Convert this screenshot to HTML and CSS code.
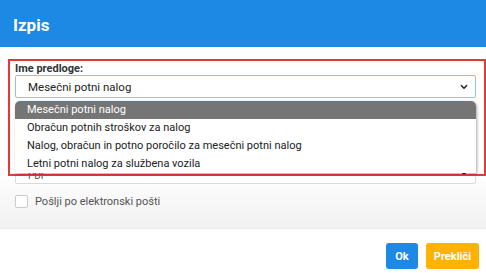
FILE: index.html
```html
<!DOCTYPE html>
<html lang="sl">
<head>
    <meta charset="UTF-8">
    <title>Izpis</title>
    <link rel="stylesheet" href="styles.css">
</head>
<body>
    <div class="modal">
        <div class="modal-head">
            <h2>Izpis</h2>
        </div>
        <div class="modal-body">
            <div class="highlight">
                <label class="field-label">Ime predloge:</label>
                <div class="select select-focus">
                    <span>Mesečni potni nalog</span>
                    <svg class="caret" width="8" height="6" viewBox="0 0 8 6"><path d="M1 1.2 L4 4.2 L7 1.2" fill="none" stroke="#222" stroke-width="1.6"/></svg>
                </div>
                <ul class="options">
                    <li class="active">Mesečni potni nalog</li>
                    <li>Obračun potnih stroškov za nalog</li>
                    <li>Nalog, obračun in potno poročilo za mesečni potni nalog</li>
                    <li>Letni potni nalog za službena vozila</li>
                </ul>
            </div>
            <div class="select select-under">
                <span>PDF</span>
                <svg class="caret" width="8" height="6" viewBox="0 0 8 6"><path d="M1 1.2 L4 4.2 L7 1.2" fill="none" stroke="#222" stroke-width="1.6"/></svg>
            </div>
            <label class="check">
                <span class="box"></span>
                <span>Pošlji po elektronski pošti</span>
            </label>
        </div>
        <div class="modal-foot">
            <button class="btn btn-ok">Ok</button>
            <button class="btn btn-cancel">Prekliči</button>
        </div>
    </div>
</body>
</html>
```

FILE: styles.css
```css
html, body {
    margin: 0;
    padding: 0;
    background: #fff;
    font-family: Roboto, "Liberation Sans", sans-serif;
    color: #212121;
}
.modal {
    width: 486px;
    height: 273px;
    display: flex;
    flex-direction: column;
    overflow: hidden;
}
.modal-head {
    height: 47px;
    background: #1e88e5;
    display: flex;
    align-items: center;
    padding-left: 13px;
}
.modal-head h2 {
    margin: 0;
    color: #fff;
    font-size: 17px;
    font-weight: 700;
    margin-top: 2px;
}
.modal-body {
    position: relative;
    height: 182px;
    padding: 12px 10px 0 15px;
    box-sizing: border-box;
    background: linear-gradient(to bottom, #fff 0%, #fff 68%, #f1f1f1 100%);
    border-bottom: 1px solid #ececec;
}
.highlight {
    position: absolute;
    left: 8px;
    top: 12px;
    width: 469px;
    height: 111px;
    border: 2px solid #e53935;
    z-index: 2;
    padding: 2px 0 0 5px;
    box-sizing: content-box;
}
.field-label {
    display: block;
    font-size: 11px;
    font-weight: 700;
    color: #333;
    line-height: 12px;
}
.select {
    height: 23px;
    width: 461px;
    box-sizing: border-box;
    border: 1px solid #cfd8dc;
    border-radius: 2px;
    display: flex;
    align-items: center;
    justify-content: space-between;
    padding: 0 7px 0 12px;
    font-size: 11.5px;
    color: #222;
    background: #fff;
}
.select-focus {
    border-color: #90c2f0;
}
.options {
    list-style: none;
    margin: 3px 0 0;
    padding: 0;
    width: 461px;
    background: #fff;
    border-radius: 5px 5px 0 0;
    box-shadow: 1px 1px 3px rgba(0,0,0,0.35);
    font-size: 11px;
}
.options li {
    height: 18px;
    line-height: 18px;
    padding-left: 12px;
}
.options li.active {
    background: #757575;
    color: #fff;
    border-radius: 5px 5px 0 0;
}
.select-under {
    margin-top: 102px;
    border-color: #d5dbdf;
    padding-bottom: 0;
    font-size: 10px;
    color: #555;
}
.select-under span {
    align-self: flex-end;
    padding-bottom: 2px;
}
.check {
    display: flex;
    align-items: center;
    gap: 7px;
    margin-top: 11px;
    font-size: 11px;
    color: #555;
}
.box {
    width: 13px;
    height: 13px;
    border: 1px solid #ccc;
    border-radius: 2px;
    box-sizing: border-box;
    background: #fff;
}
.modal-foot {
    flex: 1;
    display: flex;
    justify-content: flex-end;
    align-items: flex-start;
    gap: 8px;
    padding: 14px 7px 0 0;
}
.btn {
    height: 26px;
    border: 0;
    border-radius: 3px;
    color: #fff;
    font-family: Roboto, "Liberation Sans", sans-serif;
    font-size: 11px;
    font-weight: 700;
    padding: 0;
}
.btn-ok {
    width: 32px;
    background: #1e88e5;
}
.btn-cancel {
    width: 53px;
    background: #ffb300;
}
```
